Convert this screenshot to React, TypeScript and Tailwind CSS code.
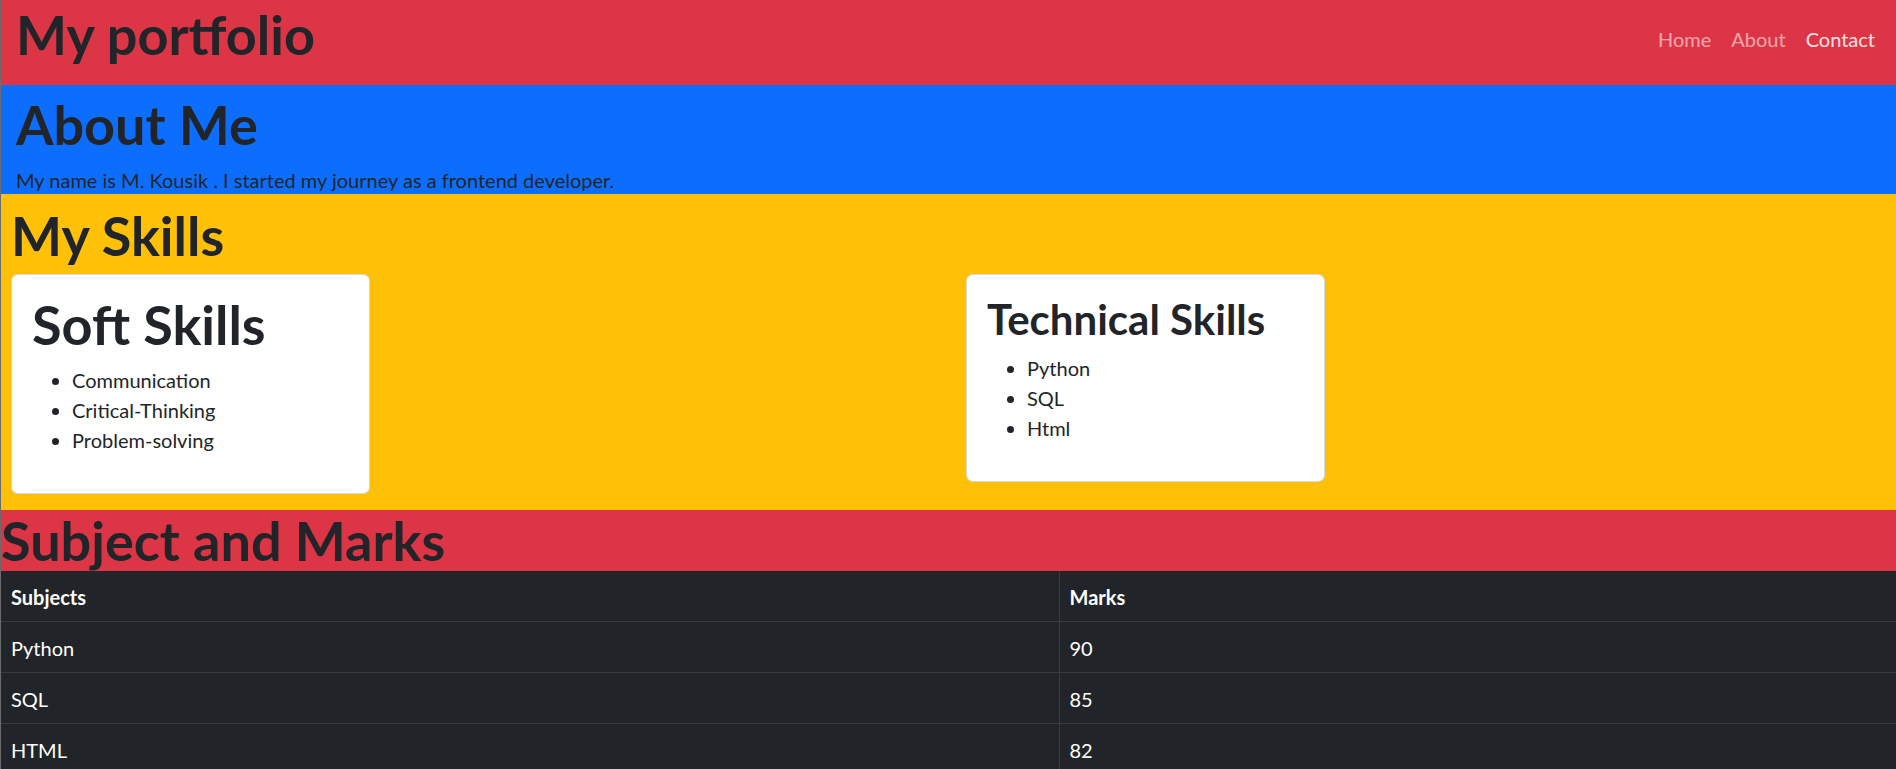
const softSkills = ["Communication", "Critical-Thinking", "Problem-solving"];
const techSkills = ["Python", "SQL", "Html"];
const marks = [
  { subject: "Python", mark: 90 },
  { subject: "SQL", mark: 85 },
  { subject: "HTML", mark: 82 },
];

export default function App() {
  return (
    <div className="min-h-[769px] border-l border-[#6b6b6b] bg-[#212529] font-['Lato','Liberation_Sans',sans-serif] text-[20px] text-[#212529]">
      {/* navbar */}
      <header className="flex h-[85px] items-start justify-between bg-[#dc3545] pl-[15px] pr-[21px]">
        <h1 className="mt-[5px] text-[54px] font-bold leading-[60px]">My portfolio</h1>
        <nav className="mt-[24px] flex gap-[20px] leading-[30px]">
          <a className="text-white/55">Home</a>
          <a className="text-white/55">About</a>
          <a className="text-white/85">Contact</a>
        </nav>
      </header>

      {/* about */}
      <section className="h-[109px] bg-[#0d6efd] pl-[15px] pt-[10px]">
        <h1 className="mb-[10px] text-[54px] font-bold leading-[60px]">About Me</h1>
        <p className="leading-[30px]">My name is M. Kousik . I started my journey as a frontend developer.</p>
      </section>

      {/* skills */}
      <section className="bg-[#ffc107] px-[10px] pb-[16px] pt-[12px]">
        <h1 className="mb-[8px] text-[54px] font-bold leading-[60px]">My Skills</h1>
        <div className="grid grid-cols-[955px_1fr] items-start">
          <div className="w-[359px] rounded-[7px] border border-black/15 bg-white px-[20px] pb-[18px] pt-[20px]">
            <h1 className="mb-[10px] text-[54px] font-bold leading-[60px]">Soft Skills</h1>
            <ul className="mb-[20px] list-disc pl-[40px] leading-[30px]">
              {softSkills.map((s) => (
                <li key={s}>{s}</li>
              ))}
            </ul>
          </div>
          <div className="w-[359px] rounded-[7px] border border-black/15 bg-white px-[20px] pb-[18px] pt-[20px]">
            <h2 className="mb-[10px] text-[42px] font-bold leading-[48px]">Technical Skills</h2>
            <ul className="mb-[20px] list-disc pl-[40px] leading-[30px]">
              {techSkills.map((s) => (
                <li key={s}>{s}</li>
              ))}
            </ul>
          </div>
        </div>
      </section>

      {/* marks */}
      <section className="h-[61px] bg-[#dc3545]">
        <h1 className="pt-[1px] text-[54px] font-bold leading-[60px]">Subject and Marks</h1>
      </section>

      <table className="w-full border-collapse bg-[#212529] text-white">
        <thead>
          <tr className="border-b border-[#373b3e]">
            <th className="w-[1058px] border-r border-[#373b3e] px-[10px] pb-[9px] pt-[11px] text-left font-bold leading-[30px]">Subjects</th>
            <th className="px-[10px] pb-[9px] pt-[11px] text-left font-bold leading-[30px]">Marks</th>
          </tr>
        </thead>
        <tbody>
          {marks.map((m) => (
            <tr key={m.subject} className="border-b border-[#373b3e]">
              <td className="border-r border-[#373b3e] px-[10px] pb-[9px] pt-[11px] leading-[30px]">{m.subject}</td>
              <td className="px-[10px] pb-[9px] pt-[11px] leading-[30px]">{m.mark}</td>
            </tr>
          ))}
        </tbody>
      </table>
    </div>
  );
}
